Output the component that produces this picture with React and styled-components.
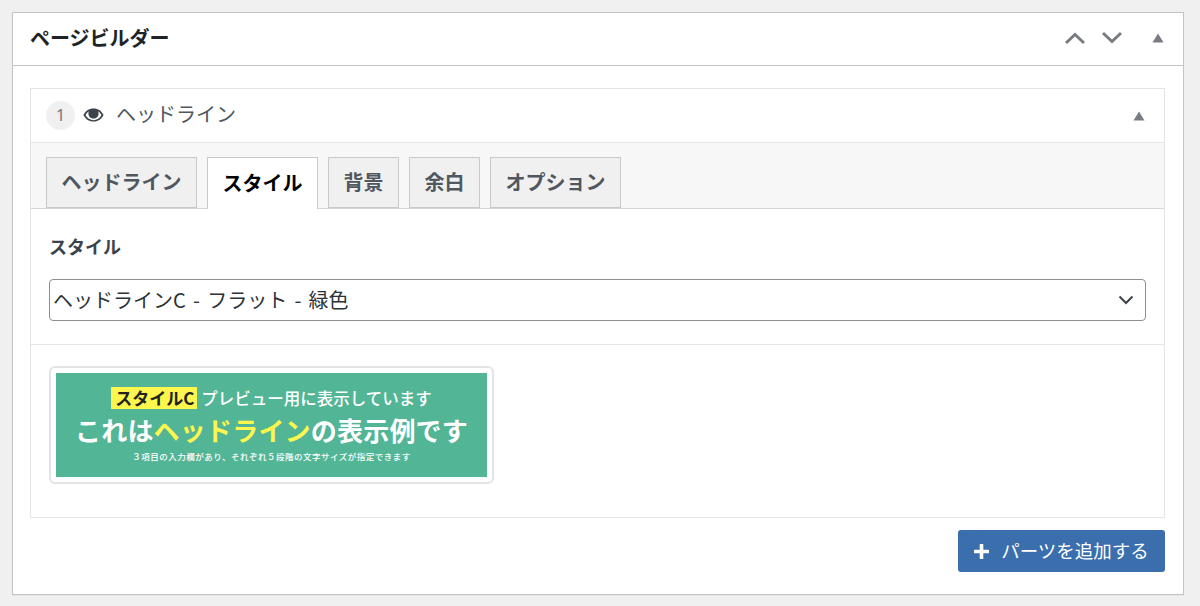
import React from "react";
import styled, { createGlobalStyle } from "styled-components";

const FONT = `"Noto Sans CJK JP", "Noto Sans", sans-serif`;

const Global = createGlobalStyle`
  html, body { margin: 0; padding: 0; background: #f0f0f1; }
  body { font-family: ${FONT}; width: 1200px; height: 606px; overflow: hidden; }
`;

const Page = styled.div`
  box-sizing: border-box;
  width: 1200px;
  height: 606px;
  padding: 12px 16px 11px 12px;
`;

const Panel = styled.section`
  box-sizing: border-box;
  height: 583px;
  background: #fff;
  border: 1px solid #c3c4c7;
  box-shadow: 0 1px 1px rgba(0, 0, 0, 0.04);
`;

const PanelHead = styled.header`
  box-sizing: border-box;
  height: 53px;
  display: flex;
  align-items: center;
  padding: 0 19px 3px 17px;
  border-bottom: 1px solid #c3c4c7;
`;

const PanelTitle = styled.h2`
  margin: 0;
  flex: 1;
  font-size: 20px;
  font-weight: 700;
  line-height: 1;
  color: #1d2327;
`;

const HeadIcons = styled.div`
  display: flex;
  align-items: center;
`;

const Chevron = styled.svg`
  display: block;
  width: 22px;
  height: 14px;
  margin-right: ${(p) => p.$gap}px;
`;

const Triangle = styled.svg`
  display: block;
  width: 12px;
  height: 10px;
`;

const PanelBody = styled.div`
  padding: 22px 18px 0 17px;
`;

const Card = styled.article`
  box-sizing: border-box;
  height: 430px;
  border: 1px solid #e4e4e4;
  background: #fff;
`;

const CardHead = styled.div`
  box-sizing: border-box;
  height: 54px;
  display: flex;
  align-items: center;
  padding: 0 19px 0 15px;
  border-bottom: 1px solid #e6e6e6;
`;

const Badge = styled.span`
  width: 29px;
  height: 29px;
  border-radius: 50%;
  background: #f0f0f0;
  color: #777;
  font-size: 16px;
  line-height: 29px;
  text-align: center;
  font-family: "Noto Sans", sans-serif;
`;

const Eye = styled.svg`
  display: block;
  width: 21px;
  height: 14px;
  margin: 0 12px 2px 8px;
`;

const CardTitle = styled.span`
  flex: 1;
  font-size: 20px;
  line-height: 1;
  margin-bottom: 3px;
  color: #50575e;
`;

const TabBar = styled.nav`
  box-sizing: border-box;
  height: 66px;
  display: flex;
  align-items: flex-end;
  gap: 10px;
  padding: 0 0 0 15px;
  background: #f7f7f7;
  border-bottom: 1px solid #d6d6d6;
`;

const Tab = styled.div`
  box-sizing: border-box;
  height: ${(p) => (p.$active ? 52 : 51)}px;
  margin-bottom: ${(p) => (p.$active ? -1 : 0)}px;
  padding: 0 14.5px 3px;
  display: flex;
  align-items: center;
  justify-content: center;
  font-size: 20px;
  font-weight: 700;
  color: ${(p) => (p.$active ? "#000" : "#50575e")};
  background: ${(p) => (p.$active ? "#fff" : "#f0f0f1")};
  border: 1px solid #c9c9c9;
  border-bottom: ${(p) => (p.$active ? "none" : "1px solid #c9c9c9")};
`;

const Form = styled.div`
  box-sizing: border-box;
  height: 136px;
  padding: 24px 18px 0 18px;
  border-bottom: 1px solid #e6e6e6;
`;

const Label = styled.div`
  font-size: 18px;
  font-weight: 700;
  line-height: 26px;
  color: #3c434a;
`;

const Select = styled.div`
  box-sizing: border-box;
  height: 42px;
  margin-top: 20px;
  display: flex;
  align-items: center;
  padding: 0 11px 2px 3px;
  border: 1px solid #8c8f94;
  border-radius: 4px;
  font-size: 20px;
  word-spacing: 2.75px;
  color: #2c3338;
`;

const SelectText = styled.span`
  flex: 1;
`;

const SelectArrow = styled.svg`
  display: block;
  width: 16px;
  height: 10px;
  margin-top: 2px;
`;

const Preview = styled.div`
  padding: 21px 18px 0;
`;

const PreviewFrame = styled.div`
  box-sizing: border-box;
  width: 445px;
  height: 118px;
  padding: 5px;
  border: 2px solid #e4e4e6;
  border-radius: 6px;
  background: #fff;
`;

const PreviewBanner = styled.div`
  height: 104px;
  background: #52b596;
  color: #fff;
  display: flex;
  flex-direction: column;
  align-items: center;
  font-weight: 700;
`;

const BannerTop = styled.div`
  margin-top: 14px;
  display: flex;
  align-items: center;
  height: 22px;
  font-size: 16.5px;
  font-weight: 500;
  white-space: nowrap;
`;

const StyleTag = styled.span`
  background: #fcf64d;
  color: #222;
  font-size: 17px;
  font-weight: 700;
  height: 22px;
  line-height: 21px;
  padding: 0 3px 0 4px;
  margin-right: 4px;
`;

const BannerMain = styled.div`
  margin-top: 3px;
  font-size: 26px;
  line-height: 36px;
  white-space: nowrap;
  letter-spacing: 0.2px;
`;

const Accent = styled.span`
  color: #fcf64d;
`;

const BannerSmall = styled.div`
  margin-top: 2px;
  font-size: 8.5px;
  font-weight: 500;
  line-height: 12px;
  white-space: nowrap;
  letter-spacing: 0.5px;
`;

const Footer = styled.div`
  display: flex;
  justify-content: flex-end;
  padding: 12px 0 0 0;
`;

const AddButton = styled.button`
  box-sizing: border-box;
  width: 207px;
  height: 42px;
  display: flex;
  align-items: center;
  justify-content: center;
  gap: 12px;
  padding: 0 0 3px;
  border: none;
  border-radius: 3px;
  background: #3a6ead;
  color: #fff;
  font-family: ${FONT};
  font-size: 18.5px;
`;

const PlusIcon = styled.svg`
  display: block;
  width: 15px;
  height: 15px;
  margin-top: 3px;
`;

const ChevronIcon = ({ up, gap }) => (
  <Chevron viewBox="0 0 22 14" $gap={gap}>
    <path
      d={up ? "M2 12 L11 3.5 L20 12" : "M2 2 L11 10.5 L20 2"}
      fill="none"
      stroke="#787c82"
      strokeWidth="3"
    />
  </Chevron>
);

const TriangleIcon = () => (
  <Triangle viewBox="0 0 12 10">
    <path d="M6 0.5 L11.5 9.5 L0.5 9.5 Z" fill="#787c82" />
  </Triangle>
);

const tabs = ["ヘッドライン", "スタイル", "背景", "余白", "オプション"];

export default function App() {
  return (
    <Page>
      <Global />
      <Panel>
        <PanelHead>
          <PanelTitle>ページビルダー</PanelTitle>
          <HeadIcons>
            <ChevronIcon up gap={15} />
            <ChevronIcon gap={29} />
            <TriangleIcon />
          </HeadIcons>
        </PanelHead>
        <PanelBody>
          <Card>
            <CardHead>
              <Badge>1</Badge>
              <Eye viewBox="0 0 21 14">
                <path
                  fillRule="evenodd"
                  d="M10.5 0.5C5.8 0.5 2.2 3.2 0.4 7c1.8 3.8 5.4 6.5 10.1 6.5s8.3-2.7 10.1-6.5C18.8 3.2 15.2 0.5 10.5 0.5zM10.5 12.2C7.2 12.2 4.2 10.3 2.5 7c0.8-1.6 2-2.9 3.4-3.8C5.5 3.9 5.4 4.7 5.4 5.5c0 2.9 2.3 5.1 5.1 5.1s5.1-2.2 5.1-5.1c0-.8-.2-1.6-.5-2.3 1.4.9 2.6 2.2 3.4 3.8-1.7 3.3-4.7 5.2-8 5.2z"
                  fill="#3c434a"
                />
              </Eye>
              <CardTitle>ヘッドライン</CardTitle>
              <TriangleIcon />
            </CardHead>
            <TabBar>
              {tabs.map((t, i) => (
                <Tab key={t} $active={i === 1}>
                  {t}
                </Tab>
              ))}
            </TabBar>
            <Form>
              <Label>スタイル</Label>
              <Select>
                <SelectText>ヘッドラインC - フラット - 緑色</SelectText>
                <SelectArrow viewBox="0 0 16 10">
                  <path d="M1.5 1.5 L8 8 L14.5 1.5" fill="none" stroke="#3c434a" strokeWidth="2" />
                </SelectArrow>
              </Select>
            </Form>
            <Preview>
              <PreviewFrame>
                <PreviewBanner>
                  <BannerTop>
                    <StyleTag>スタイルC</StyleTag>
                    プレビュー用に表示しています
                  </BannerTop>
                  <BannerMain>
                    これは<Accent>ヘッドライン</Accent>の表示例です
                  </BannerMain>
                  <BannerSmall>３項目の入力欄があり、それぞれ５段階の文字サイズが指定できます</BannerSmall>
                </PreviewBanner>
              </PreviewFrame>
            </Preview>
          </Card>
          <Footer>
            <AddButton>
              <PlusIcon viewBox="0 0 15 15">
                <path d="M7.5 1 V14 M1 7.5 H14" stroke="#fff" strokeWidth="3.6" strokeLinecap="round" />
              </PlusIcon>
              パーツを追加する
            </AddButton>
          </Footer>
        </PanelBody>
      </Panel>
    </Page>
  );
}
